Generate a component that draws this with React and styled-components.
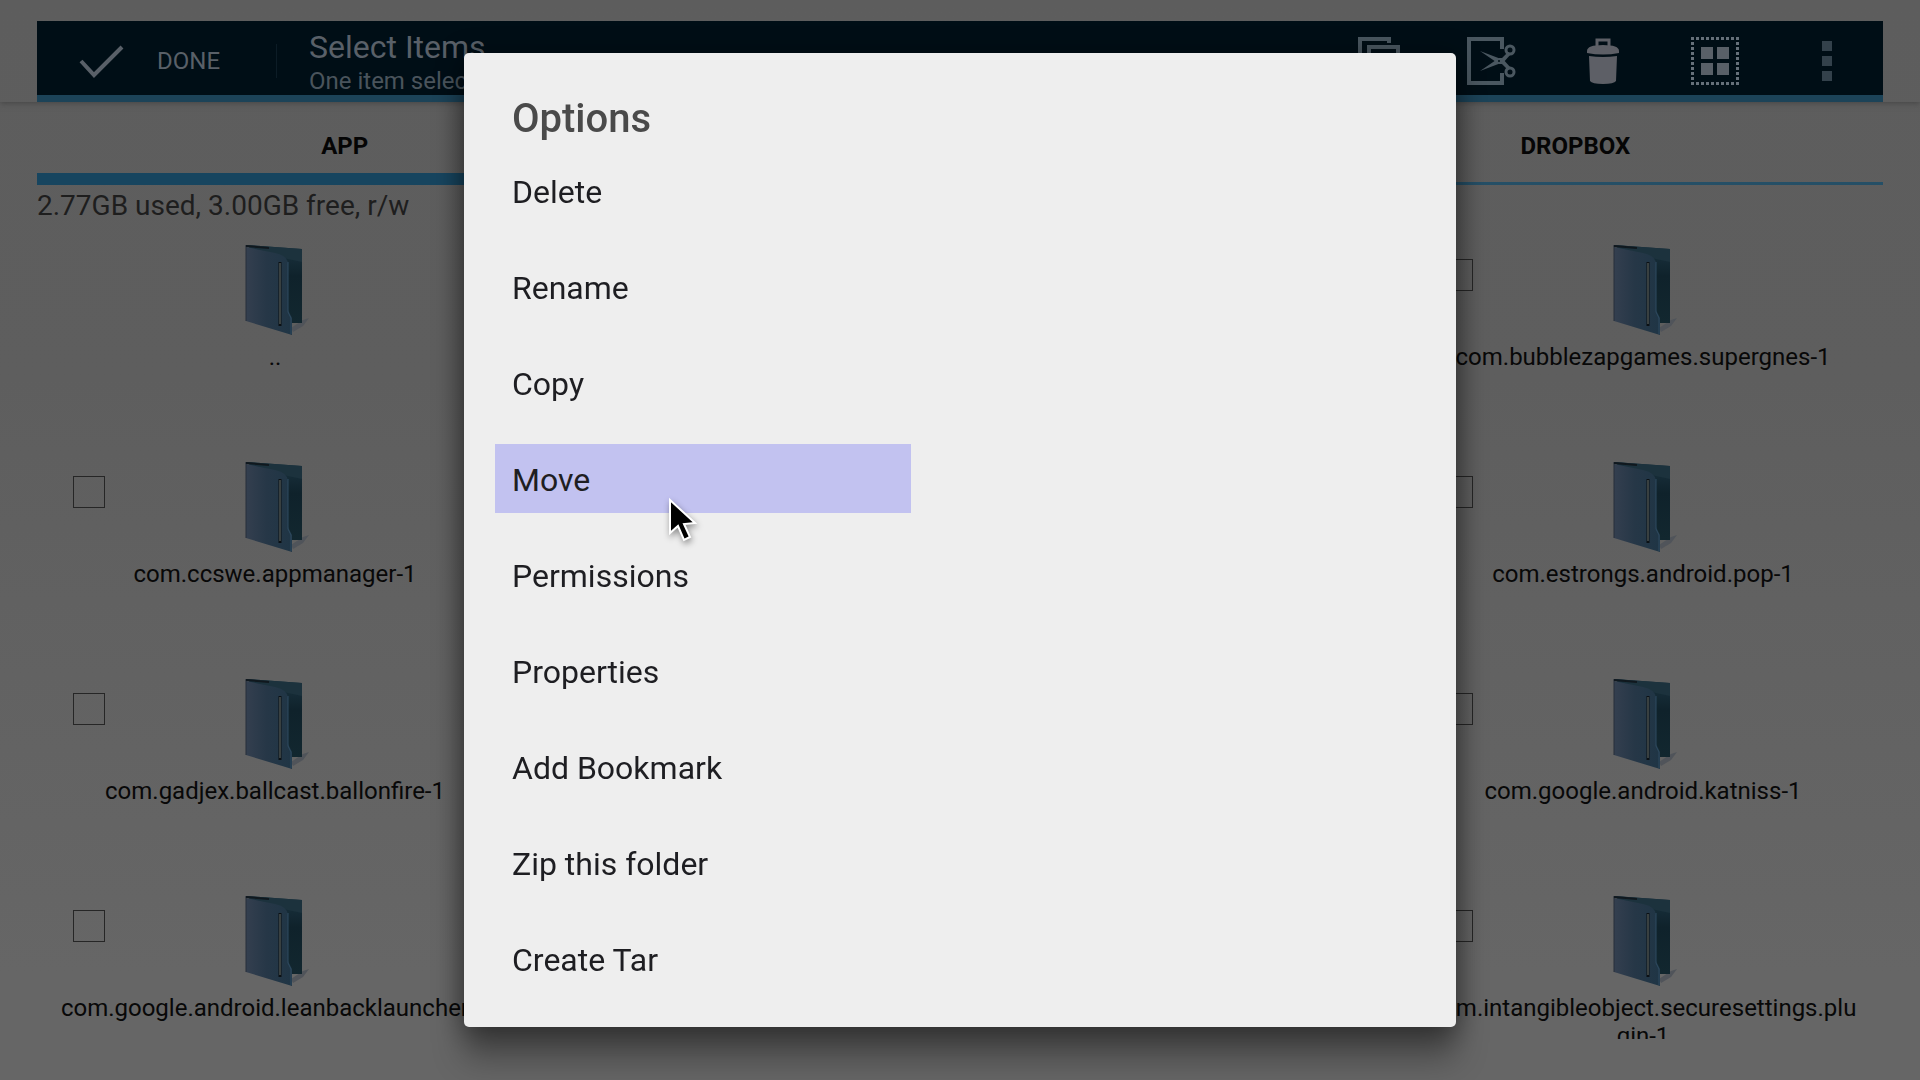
import styled, { createGlobalStyle } from "styled-components";

const files = [
    { name: "..", col: 1, row: 1, isParent: true },
    { name: "com.bubblezapgames.supergnes-1", col: 4, row: 1 },
    { name: "com.ccswe.appmanager-1", col: 1, row: 2 },
    { name: "com.estrongs.android.pop-1", col: 4, row: 2 },
    { name: "com.gadjex.ballcast.ballonfire-1", col: 1, row: 3 },
    { name: "com.google.android.katniss-1", col: 4, row: 3 },
    { name: "com.google.android.leanbacklauncher-1", col: 1, row: 4 },
    { name: "com.intangibleobject.securesettings.plugin-1", col: 4, row: 4 },
];

const options = [
    "Delete",
    "Rename",
    "Copy",
    "Move",
    "Permissions",
    "Properties",
    "Add Bookmark",
    "Zip this folder",
    "Create Tar",
];

const FolderIcon = () => (
    <svg width="72" height="96" viewBox="0 0 72 96" aria-hidden="true">
        <defs>
            <linearGradient id="front" x1="0" y1="0" x2="1" y2="0">
                <stop offset="0" stopColor="#343f4f" />
                <stop offset="0.45" stopColor="#263747" />
                <stop offset="1" stopColor="#1f3545" />
            </linearGradient>
            <linearGradient id="back" x1="0" y1="0" x2="0" y2="1">
                <stop offset="0" stopColor="#1b3340" />
                <stop offset="0.4" stopColor="#0f222b" />
                <stop offset="1" stopColor="#12272f" />
            </linearGradient>
        </defs>
        <path d="M52 84 L64 76 L70 74 L64 82 L54 88 Z" fill="#50545a" />
        <path d="M7 1 L63 5 V79 L50 79 L40 30 Z" fill="url(#back)" />
        <path d="M7 1 L63 5 V18 L44 14 Z" fill="#1c323d" />
        <path d="M7 3 L36 9 Q49 12 49 20 V66 L53 74 V91 L7 77 Z" fill="url(#front)" />
        <path d="M49 18 V68 L52 74 V90" stroke="#2e4b60" fill="none" />
        <path d="M7 1 V77" stroke="#262e3a" fill="none" />
        <path d="M7 2 L30 4" stroke="#10181e" strokeWidth="2" fill="none" />
        <path d="M41 18 V82" stroke="#0b1014" strokeWidth="3" />
        <path d="M41 19 V80" stroke="#68706c" strokeWidth="1" />
    </svg>
);

const CheckIcon = () => (
    <svg width="48" height="48" viewBox="0 0 48 48" aria-hidden="true">
        <path d="M4 24 L17 38 L45 10" fill="none" stroke="#596068" strokeWidth="4" />
    </svg>
);

const CopyIcon = () => (
    <svg width="50" height="50" viewBox="0 0 50 50" fill="none" stroke="#4a5760" strokeWidth="4" aria-hidden="true">
        <path d="M35 7 V3 H6 V38 H11" />
        <path d="M15 11 H44 V48 H15 Z" />
    </svg>
);

const CutIcon = () => (
    <svg width="50" height="50" viewBox="0 0 50 50" fill="none" stroke="#4a5760" strokeWidth="4" aria-hidden="true">
        <path d="M36 13 V3 H3 V47 H36 V37" />
        <path d="M14 15 L35 23 L42 16 L45 18 L36 28 L33 28 Z" fill="#4a5760" stroke="none" />
        <path d="M14 35 L35 27 L42 34 L45 32 L36 22 L33 22 Z" fill="#4a5760" stroke="none" />
        <circle cx="44" cy="14" r="4" strokeWidth="3" />
        <circle cx="44" cy="36" r="4" strokeWidth="3" />
        <circle cx="33" cy="25" r="1" fill="#000e16" stroke="none" />
    </svg>
);

const TrashIcon = () => (
    <svg width="50" height="50" viewBox="0 0 50 50" fill="#5d5f66" aria-hidden="true">
        <path d="M19 10 V4 H31 V10" fill="none" stroke="#5d5f66" strokeWidth="3" />
        <path d="M9 15 Q9 9 25 9 Q41 9 41 15 V17 Q25 20 9 17 Z" />
        <path d="M11 20 Q25 22 39 20 L38 45 Q36 48 25 48 Q14 48 12 45 Z" />
    </svg>
);

const SelectAllIcon = () => (
    <svg width="50" height="50" viewBox="0 0 50 50" fill="#596068" aria-hidden="true">
        <path
            d="M2.5 2.5 H47.5 V47.5 H2.5 Z"
            fill="none"
            stroke="#66707a"
            strokeWidth="3"
            strokeDasharray="3 2"
            strokeDashoffset="1.5"
        />
        <path d="M11 11 H23 V23 H11 Z M27 11 H39 V23 H27 Z M11 27 H23 V39 H11 Z M27 27 H39 V39 H27 Z" />
    </svg>
);

const MoreIcon = () => (
    <svg width="50" height="50" viewBox="0 0 50 50" fill="#33414b" aria-hidden="true">
        <path d="M20 5 H30 V15 H20 Z M20 20 H30 V30 H20 Z M20 35 H30 V45 H20 Z" />
    </svg>
);

const PointerIcon = () => (
    <svg width="36" height="48" viewBox="0 0 36 48" aria-hidden="true">
        <path d="M5 3 V36 L13 29 L19 43 L25 40 L19 27 L30 26 Z" fill="#000" stroke="#fff" strokeWidth="2" />
    </svg>
);

const App = () => {
    return (
        <Page>
            <GlobalStyle />
            <Header>
                <ActionBar>
                    <DoneButton>
                        <CheckIcon />
                        Done
                    </DoneButton>
                    <Heading>
                        <Title>Select Items</Title>
                        <Subtitle>One item selected</Subtitle>
                    </Heading>
                    <Actions>
                        <IconButton aria-label="Copy"><CopyIcon /></IconButton>
                        <IconButton aria-label="Cut"><CutIcon /></IconButton>
                        <IconButton aria-label="Delete"><TrashIcon /></IconButton>
                        <IconButton aria-label="Select all"><SelectAllIcon /></IconButton>
                        <IconButton aria-label="More"><MoreIcon /></IconButton>
                    </Actions>
                </ActionBar>
            </Header>
            <Content>
                <Tabs>
                    <Tab $active>App</Tab>
                    <Tab aria-label="Current" />
                    <Tab>Dropbox</Tab>
                </Tabs>
                <Storage>2.77GB used, 3.00GB free, r/w</Storage>
                <FileGrid>
                    {files.map((file) => (
                        <FileCell key={file.name} $col={file.col} $row={file.row}>
                            {!file.isParent && <Check type="checkbox" aria-label={file.name} />}
                            <FolderIcon />
                            <FileName>{file.name}</FileName>
                        </FileCell>
                    ))}
                </FileGrid>
            </Content>
            <Overlay>
                <Dialog role="dialog" aria-labelledby="options-title">
                    <DialogTitle id="options-title">Options</DialogTitle>
                    <OptionList>
                        {options.map((option) => (
                            <li key={option}>
                                <OptionButton $selected={option === "Move"}>
                                    {option}
                                    {option === "Move" && <Pointer><PointerIcon /></Pointer>}
                                </OptionButton>
                            </li>
                        ))}
                    </OptionList>
                </Dialog>
            </Overlay>
        </Page>
    );
};

const GlobalStyle = createGlobalStyle`
  * {
    box-sizing: border-box;
  }
  body {
    margin: 0;
    font-family: Roboto, "Liberation Sans", sans-serif;
  }
  button {
    border: none;
    background: none;
    padding: 0;
    font-family: inherit;
    cursor: pointer;
  }
`;

const Page = styled.div`
  display: flex;
  flex-direction: column;
  height: 100vh;
  overflow: hidden;
  padding-bottom: 41px;
  background: linear-gradient(#5d5d5d, #5e5e5e 35%, #666666 90%);
`;

const Header = styled.header`
  padding: 21px 37px 0;
  box-shadow: 0 1px 6px #444444;
`;

const ActionBar = styled.div`
  display: flex;
  align-items: center;
  height: 81px;
  padding-top: 6px;
  background-color: #000e16;
  border-bottom: 7px solid #1c4358;
`;

const DoneButton = styled.button`
  display: flex;
  align-items: center;
  gap: 32px;
  width: 240px;
  height: 34px;
  padding-left: 40px;
  border-right: 1px solid #0c1c26;
  color: #596068;
  font-size: 24px;
  text-transform: uppercase;
`;

const Heading = styled.div`
  flex: 1;
  padding-left: 32px;
`;

const Title = styled.h1`
  margin: 0;
  padding-top: 2px;
  color: #596068;
  font-size: 32px;
  font-weight: 400;
  line-height: 38px;
`;

const Subtitle = styled.p`
  margin: 0;
  color: #4a545c;
  font-size: 24px;
  line-height: 30px;
`;

const Actions = styled.div`
  display: flex;
`;

const IconButton = styled.button`
  display: flex;
  justify-content: center;
  width: 112px;
`;

const Content = styled.main`
  flex: 1;
  min-height: 0;
  overflow: hidden;
  margin: 0 37px;
`;

const Tabs = styled.nav`
  display: flex;
  height: 83px;
`;

const Tab = styled.button`
  flex: 1;
  padding-top: 16px;
  border-bottom: ${(props) => (props.$active ? "12px solid #17455f" : "3px solid #254f66")};
  padding-bottom: ${(props) => (props.$active ? "0" : "9px")};
  color: #050505;
  font-size: 24px;
  font-weight: 700;
  text-transform: uppercase;
`;

const Storage = styled.p`
  margin: 0;
  padding-top: 4px;
  color: #1e1e1e;
  font-size: 28px;
  line-height: 34px;
`;

const FileGrid = styled.div`
  display: grid;
  grid-template-columns: repeat(4, 1fr);
  grid-auto-rows: 217px;
  padding: 21px 12px 0 10px;
`;

const FileCell = styled.div`
  grid-column: ${(props) => props.$col};
  grid-row: ${(props) => props.$row};
  position: relative;
  display: flex;
  flex-direction: column;
  align-items: center;
  gap: 3px;
  padding: 0 12px;
`;

const Check = styled.input`
  appearance: none;
  position: absolute;
  left: 26px;
  top: 15px;
  width: 32px;
  height: 32px;
  margin: 0;
  border: 1px solid #262626;
`;

const FileName = styled.span`
  width: 100%;
  color: #080808;
  font-size: 24px;
  line-height: 28px;
  text-align: center;
  word-break: break-all;
`;

const Overlay = styled.div`
  position: fixed;
  inset: 0;
  display: flex;
  justify-content: center;
  align-items: center;
`;

const Dialog = styled.section`
  width: 992px;
  padding: 45px 31px 34px;
  border-radius: 5px;
  background-color: #eeeeee;
  box-shadow: 0 4px 28px rgba(0, 0, 0, 0.45), 0 32px 32px rgba(0, 0, 0, 0.3);
`;

const DialogTitle = styled.h2`
  margin: 0 0 4px;
  padding-left: 17px;
  color: #4a4a4a;
  font-size: 40px;
  font-weight: 500;
  line-height: 42px;
`;

const OptionList = styled.ul`
  display: flex;
  flex-direction: column;
  gap: 27px;
  margin: 0;
  padding: 12px 0 0;
  list-style: none;
`;

const OptionButton = styled.button`
  position: relative;
  display: block;
  width: 416px;
  height: 69px;
  padding-top: 2px;
  padding-left: 17px;
  background-color: ${(props) => (props.$selected ? "#c2c2f0" : "transparent")};
  color: #1e1e22;
  font-size: 32px;
  text-align: left;
`;

const Pointer = styled.span`
  position: absolute;
  left: 170px;
  top: 53px;
  filter: drop-shadow(1px 3px 3px rgba(0, 0, 0, 0.4));
`;

export default App;
